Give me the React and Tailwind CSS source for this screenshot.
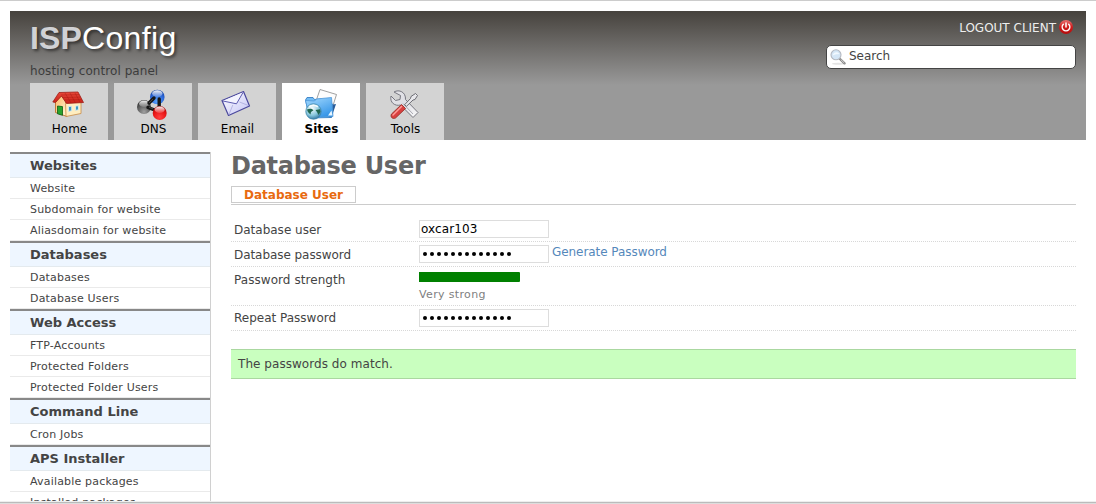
import React from "react";

function HomeIcon() {
  return (
    <svg width="32" height="32" viewBox="0 0 32 32" className="relative left-[-1px]">
      <defs>
        <linearGradient id="hWall" x1="0" y1="0" x2="1" y2="1">
          <stop offset="0" stopColor="#ffb45e" />
          <stop offset="1" stopColor="#fffbe0" />
        </linearGradient>
        <linearGradient id="hRoof" x1="0" y1="0" x2="0" y2="1">
          <stop offset="0" stopColor="#e8483a" />
          <stop offset="1" stopColor="#c82018" />
        </linearGradient>
      </defs>
      <path d="M3.500 14L9 7l6 8v13.500L3.500 24.500z" fill="url(#hWall)" stroke="#b8651c" strokeWidth=".8" />
      <path d="M13.500 14h15.500v11.500L14 28.500z" fill="#ffeec0" stroke="#c98c45" strokeWidth=".8" />
      <path d="M7 4.500L26 4l5.500 10.500-17 1-5-7.500L3.500 14.500 .8 14z" fill="url(#hRoof)" stroke="#a02018" strokeWidth=".8" />
      <path d="M9 7l18-.4M11 9.500l17.500-.4M13 12l17-.4M13 5l6 10M18 5l5.500 10M23 5l5 9" stroke="#a51610" strokeWidth=".4" fill="none" />
      <path d="M5.500 18l5 .6v8.700l-5-1.500z" fill="#27a32d" stroke="#0b5c12" strokeWidth=".8" />
      <path d="M16.500 18.500l3.200-.3v4.600l-3.200.6zM23.500 18l3-.2v4l-3 .6z" fill="#3e9bc4" stroke="#d9ecf2" strokeWidth=".9" />
    </svg>
  );
}

function DnsIcon() {
  return (
    <svg width="32" height="32" viewBox="0 0 32 32" className="relative left-[-1px]">
      <defs>
        <radialGradient id="dBlue" cx=".5" cy=".8" r=".8">
          <stop offset="0" stopColor="#5ba6ff" />
          <stop offset=".6" stopColor="#2b66d8" />
          <stop offset="1" stopColor="#12409f" />
        </radialGradient>
        <radialGradient id="dRed" cx=".5" cy=".8" r=".8">
          <stop offset="0" stopColor="#ff4040" />
          <stop offset=".6" stopColor="#e81414" />
          <stop offset="1" stopColor="#a00808" />
        </radialGradient>
        <radialGradient id="dGrey" cx=".5" cy=".85" r=".8">
          <stop offset="0" stopColor="#a0a0a0" />
          <stop offset=".6" stopColor="#5c5c5c" />
          <stop offset="1" stopColor="#2c2c2c" />
        </radialGradient>
        <linearGradient id="dShine" x1="0" y1="0" x2="0" y2="1">
          <stop offset="0" stopColor="#fff" stopOpacity=".95" />
          <stop offset="1" stopColor="#fff" stopOpacity=".15" />
        </linearGradient>
      </defs>
      <circle cx="21.300" cy="9" r="7.300" fill="url(#dBlue)" />
      <ellipse cx="21.300" cy="5.600" rx="5.200" ry="3.300" fill="url(#dShine)" />
      <circle cx="8" cy="19" r="7" fill="url(#dGrey)" />
      <ellipse cx="8" cy="15.700" rx="5" ry="3.200" fill="url(#dShine)" />
      <path d="M13 15l5-5M12 19.500l8 3M23.200 11v10" stroke="#161616" strokeWidth="3.400" strokeLinecap="round" />
      <circle cx="23.700" cy="25" r="7" fill="url(#dRed)" />
      <ellipse cx="23.700" cy="21.700" rx="5" ry="3.200" fill="url(#dShine)" />
      <path d="M13 15l4-4M13 19.300l4 1.500" stroke="#777" strokeWidth=".5" />
    </svg>
  );
}

function EmailIcon() {
  return (
    <svg width="32" height="32" viewBox="0 0 32 32" className="relative left-[-1px]">
      <defs>
        <linearGradient id="eFill" x1="0" y1="0" x2="1" y2="1">
          <stop offset="0" stopColor="#ffffff" />
          <stop offset="1" stopColor="#c4c4f6" />
        </linearGradient>
      </defs>
      <path d="M2 12.500L23.500 3.500l6 14.500L8.500 27.500z" fill="url(#eFill)" stroke="#4a489c" strokeWidth="1.200" strokeLinejoin="round" />
      <path d="M3 13l13.500 2.800L23.200 4.200" fill="#f4f4ff" stroke="#5d5bb0" strokeWidth="1" />
      <path d="M9 26.500l3.800-9.500M28.500 17.500l-9-3.500" stroke="#aaaadc" strokeWidth=".8" fill="none" />
    </svg>
  );
}

function SitesIcon() {
  return (
    <svg width="34" height="32" viewBox="0 0 34 32">
      <defs>
        <linearGradient id="sFold" x1="0" y1="0" x2=".6" y2="1">
          <stop offset="0" stopColor="#a8dcff" />
          <stop offset="1" stopColor="#3696e8" />
        </linearGradient>
        <radialGradient id="sGlobe" cx=".4" cy=".3" r=".75">
          <stop offset="0" stopColor="#fafeff" />
          <stop offset=".6" stopColor="#87c7dc" />
          <stop offset="1" stopColor="#2c6f9c" />
        </radialGradient>
      </defs>
      <path d="M16 1.500l16.500 5-6 19L10 19z" fill="#fdfdfd" stroke="#888" strokeWidth=".8" />
      <path d="M1.500 12l1.500-2.500h6L10.500 11.500l6-.5 12 5-1 13.500-22 .5z" fill="#72bcf4" stroke="#2874bd" strokeWidth=".8" />
      <path d="M29 16.500l3-.5-4.500 13.500-3-.5z" fill="#295c9a" />
      <path d="M1.500 12.500l9 .5 2-2 15-1.500 1.500 19-23.500 1z" fill="url(#sFold)" stroke="#4c97d8" strokeWidth=".8" />
      <path d="M24 27.500l3.500-5 1 5z" fill="#e9f6ff" />
      <circle cx="9.500" cy="23.500" r="7.700" fill="url(#sGlobe)" stroke="#3b84a8" strokeWidth=".8" />
      <path d="M3 21.500c3-1.500 5.500-.8 6.500.7l-2.500 1.700-.5 2.600c-1.500-1.700-3-2.200-3.500-5zM11.500 22l4.500-.8.5 2.500-2 3.300-1.500-3z" fill="#20664f" />
      <path d="M5 18.800c3-2 6-2 9 0" stroke="#fff" strokeWidth="1.800" fill="none" opacity=".85" />
    </svg>
  );
}

function ToolsIcon() {
  return (
    <svg width="32" height="32" viewBox="0 0 32 32" className="relative left-[-1px]">
      <defs>
        <linearGradient id="tMetal" x1="0" y1="0" x2="1" y2="1">
          <stop offset="0" stopColor="#e4e4e8" />
          <stop offset=".5" stopColor="#dedee4" />
          <stop offset="1" stopColor="#fafafa" />
        </linearGradient>
      </defs>
      <path d="M6 4c5-3 12 0 11.500 7.500L30 24.500 25 29.500 12.500 17C7 18.500 1.500 14.500 3 8l4.500 4.500 4.500-1 .5-4z" fill="url(#tMetal)" stroke="#777780" strokeWidth="1" strokeLinejoin="round" />
      <path d="M15 15.500l10 10.500" stroke="#aaaab4" strokeWidth="1" />
      <path d="M16.500 16.800l6-6.300.5-2 4.500-3L29.500 7.500 27 11.500l-2 .5-6.500 6.300z" fill="#e8e8ec" stroke="#606068" strokeWidth=".9" />
      <path d="M13.500 16.500l4 4-10 9.500c-3 1.500-5.500-1-4-4z" fill="#d94040" stroke="#983028" strokeWidth=".9" />
      <path d="M13.500 18.500L5 27" stroke="#ff9c98" strokeWidth="1.500" strokeLinecap="round" />
    </svg>
  );
}

function SearchIcon() {
  return (
    <svg width="16" height="16" viewBox="0 0 16 16" className="shrink-0">
      <ellipse cx="8" cy="14.800" rx="6" ry="1" fill="#e4e4e4" />
      <path d="M10 10l4.500 4.300" stroke="#888" strokeWidth="2.400" strokeLinecap="round" />
      <path d="M11 10.800l3 2.900" stroke="#d5d5d5" strokeWidth="1" strokeLinecap="round" />
      <circle cx="6" cy="5.800" r="5" fill="#d4e6f6" stroke="#b4b8c0" strokeWidth="1.100" />
      <path d="M2.500 6.500c1-3.500 5-4.500 7-1.500-2 .2-4 .3-7 1.500z" fill="#f2f9ff" />
    </svg>
  );
}

function PowerIcon() {
  return (
    <svg width="14" height="14" viewBox="0 0 14 14" className="relative top-[-1px] shrink-0">
      <defs>
        <linearGradient id="pRed" x1="0" y1="0" x2="0" y2="1">
          <stop offset="0" stopColor="#e87070" />
          <stop offset=".5" stopColor="#cf1c1c" />
          <stop offset="1" stopColor="#b50c0c" />
        </linearGradient>
      </defs>
      <circle cx="7" cy="7" r="7" fill="url(#pRed)" />
      <path d="M4.300 4.300a3.800 3.800 0 1 0 5.400 0M7 3v4" fill="none" stroke="#fff" strokeWidth="1.500" strokeLinecap="round" />
    </svg>
  );
}

const tabs = [
  { label: "Home", Icon: HomeIcon },
  { label: "DNS", Icon: DnsIcon },
  { label: "Email", Icon: EmailIcon },
  { label: "Sites", Icon: SitesIcon, active: true },
  { label: "Tools", Icon: ToolsIcon },
];

const menu = [
  { title: "Websites", items: ["Website", "Subdomain for website", "Aliasdomain for website"] },
  { title: "Databases", items: ["Databases", "Database Users"] },
  { title: "Web Access", items: ["FTP-Accounts", "Protected Folders", "Protected Folder Users"] },
  { title: "Command Line", items: ["Cron Jobs"] },
  { title: "APS Installer", items: ["Available packages", "Installed packages"] },
];

function Header() {
  return (
    <header className="flex h-[129px] shrink-0 flex-col justify-between bg-[linear-gradient(to_bottom,#46423d_0px,#999_74px)] pl-5">
      <div className="flex justify-between pr-[10px]">
        <div className="pt-[9px]">
          <div className="flex h-[37px] items-center font-['Liberation_Sans',sans-serif] text-[32px] leading-[37px] text-white [text-shadow:2px_2px_3px_rgba(0,0,0,0.5)]">
            <span className="font-bold tracking-[0.1px] text-[#d0d1d4]">ISP</span>
            <span className="tracking-[0.4px]">Config</span>
          </div>
          <div className="mt-[6px] leading-4 tracking-[0.06px] text-[#3c3c3c]">hosting control panel</div>
        </div>
        <div className="flex flex-col items-end pt-[9px]">
          <div className="flex h-4 items-center gap-[3px] pr-[3px] text-[#eee]">
            <span>LOGOUT CLIENT</span>
            <PowerIcon />
          </div>
          <div className="mt-[9px] flex h-6 w-[250px] items-center gap-[3px] rounded-[5px] border border-[#444] bg-white pl-[3px] text-[#444]">
            <SearchIcon />
            <span className="pb-[2px]">Search</span>
          </div>
        </div>
      </div>
      <nav className="flex gap-[6px]">
        {tabs.map(({ label, Icon, active }) => (
          <div
            key={label}
            className={
              "flex h-[57px] w-[78px] flex-col items-center pt-[5px] text-black " +
              (active ? "bg-white font-bold" : "bg-[#d3d3d3]")
            }
          >
            <Icon />
            <span className="mt-[1px] pl-[1px] leading-4">{label}</span>
          </div>
        ))}
      </nav>
    </header>
  );
}

function Sidebar() {
  return (
    <aside className="h-[349px] w-[201px] shrink-0 overflow-hidden border-r border-[#d0d0d0]">
      {menu.map((group) => (
        <section key={group.title}>
          <h2 className="h-[26px] border-t-2 border-b border-t-[#888] border-b-[#e4eaee] bg-[#eef6ff] pl-5 text-[13px] leading-[23px] font-bold text-[#444]">
            {group.title}
          </h2>
          {group.items.map((item) => (
            <div key={item} className="h-[21px] border-b border-[#eaeaea] pl-5 text-[11px] leading-[22px] tracking-[0.18px] text-[#444]">
              {item}
            </div>
          ))}
        </section>
      ))}
    </aside>
  );
}

function Field({ label, height, pad = "pt-[5px]", children }) {
  return (
    <div className={"flex border-b border-dotted border-[#d8d8d8] pl-[3px] " + height}>
      <div className={"w-[185px] leading-4 " + pad}>{label}</div>
      {children}
    </div>
  );
}

function PasswordBox() {
  return (
    <div className="mt-[3px] flex h-[18px] w-[130px] items-center gap-[3px] border border-[#ddd] bg-white pb-px pl-[2.500px]">
      {Array.from({ length: 13 }, (_, i) => (
        <span key={i} className="h-1 w-1 rounded-full bg-black" />
      ))}
    </div>
  );
}

function Content() {
  return (
    <main className="mr-[10px] ml-5 flex-1">
      <h1 className="h-[28px] text-[24px] leading-[28px] font-bold tracking-[-0.27px] text-[#666]">Database User</h1>
      <div className="mt-[6px] h-[19px] border-b border-[#ccc]">
        <div className="h-[17px] w-[125px] border border-[#ccc] text-center leading-[16px] font-bold text-[#e86a10]">Database User</div>
      </div>
      <div className="pt-3 text-[#444]">
        <Field label="Database user" height="h-[25px]">
          <div className="mt-[3px] h-[18px] w-[130px] border border-[#ddd] bg-white pl-[1px] leading-4 tracking-[0.1px] text-black">oxcar103</div>
        </Field>
        <Field label={<span className="tracking-[-0.06px]">Database password</span>} height="h-[25px]">
          <PasswordBox />
          <a className="pt-[2px] pl-[3px] leading-4 tracking-[-0.06px] text-[#5588bb]">Generate Password</a>
        </Field>
        <Field label={<span className="tracking-[0.06px]">Password strength</span>} height="h-[39px]">
          <div className="pt-[5px]">
            <div className="h-[10px] w-[101px] rounded-r-[1px] bg-[#008000]" />
            <div className="mt-[6px] text-[11px] leading-[14px] tracking-[0.35px] text-[#808080]">Very strong</div>
          </div>
        </Field>
        <Field label="Repeat Password" height="h-[25px]" pad="pt-[4px]">
          <PasswordBox />
        </Field>
      </div>
      <div className="mt-[18px] h-[30px] border-y border-[#aad8a0] bg-[#c9ffbf] pl-[7px] leading-[28px] tracking-[0.05px] text-[#444]">
        The passwords do match.
      </div>
    </main>
  );
}

export default function App() {
  return (
    <div className="flex h-[504px] w-[1096px] flex-col overflow-hidden border-t border-[#ccc] bg-white font-['DejaVu_Sans',sans-serif] text-[12px]">
      <div className="flex flex-1 flex-col px-[10px] pt-[10px]">
        <Header />
        <div className="mt-3 flex">
          <Sidebar />
          <Content />
        </div>
      </div>
      <footer className="h-[3px] shrink-0 border-t border-b border-t-[#eee] border-b-[#ddd] bg-[#bbb]" />
    </div>
  );
}
